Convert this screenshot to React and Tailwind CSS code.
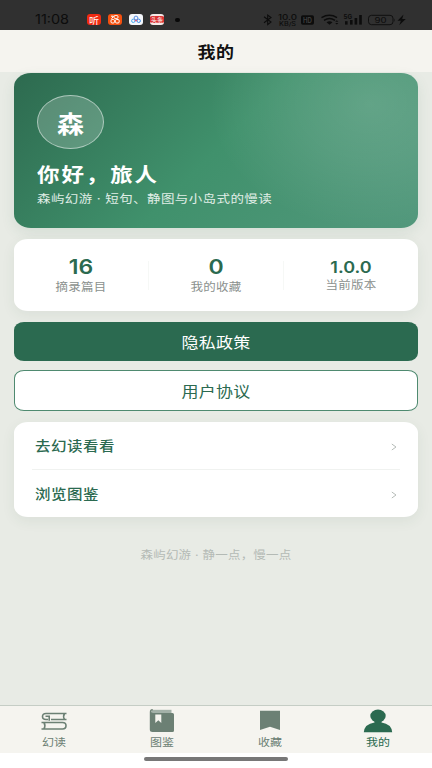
import React from 'react';

const green = '#2b6a50';
const gray = '#6c8074';

// Wide lettering: the font size sets the width, the vertical scale sets the height
function Wide({ className = '', children }) {
    return <span className={`inline-block whitespace-nowrap leading-none scale-y-[0.88] ${className}`}>{children}</span>;
}

function AppBadge({ className, children }) {
    return (
        <span className={`flex h-[11px] w-[14px] items-center justify-center rounded-[3px] ${className}`}>
            {children}
        </span>
    );
}

function StatusBar() {
    return (
        <div className="flex h-[30px] items-center bg-[#303030] pt-[9px] pl-[35px] text-[#0c0c0c]">
            <Wide className="w-[52px] pt-[2px] font-[Inter] text-[14.5px] font-normal">11:08</Wide>
            <div className="flex items-center gap-[7px]">
                <AppBadge className="bg-[#f02a12] text-[10px] text-white">
                    <Wide>听</Wide>
                </AppBadge>
                <AppBadge className="bg-[#f4500f]">
                    <svg width="14" height="11" viewBox="0 0 14 11" fill="none" stroke="#fff" strokeWidth="1">
                        <rect x="6" y="1.500" width="4" height="3" rx="1.200" />
                        <rect x="3" y="5.500" width="3.500" height="3.500" rx="1.200" />
                        <rect x="7.400" y="5.500" width="3.800" height="3.500" rx="1.200" />
                        <path d="M3 2.200h2.500L3.500 4.800" />
                    </svg>
                </AppBadge>
                <AppBadge className="bg-[#f4f6fa]">
                    <svg width="14" height="11" viewBox="0 0 14 11" fill="none" strokeWidth="1">
                        <circle cx="7" cy="4" r="1.900" stroke="#5a8fe0" />
                        <circle cx="4.300" cy="6.800" r="1.700" stroke="#45aaf0" />
                        <circle cx="9.700" cy="6.800" r="1.700" stroke="#3a8fe8" />
                        <path d="M5.500 5.800l1.500 1.400 1.500-1.400" stroke="#e2406a" />
                    </svg>
                </AppBadge>
                <AppBadge className="border-y-2 border-[#f5e9e8] bg-[#dc3333] text-[6px] text-white">
                    <span className="leading-none">头条</span>
                </AppBadge>
            </div>
            <span className="ml-[11px] h-[4px] w-[5px] rounded-full bg-[#080808]" />
            <svg className="ml-[80px]" width="148" height="14" viewBox="260 13 148 14" fill="none" stroke="#0c0c0c">
                <path d="M264 16.800l7 5.200-3.300 2.600V15l3.300 2.500-7 5.200" strokeWidth="1.100" />
                <g fill="#0c0c0c" stroke="none" fontFamily="Inter" fontWeight="500">
                    <text x="278" y="20" fontSize="7.500" textLength="19" lengthAdjust="spacingAndGlyphs">10.0</text>
                    <text x="279" y="25.800" fontSize="5.500" textLength="17" lengthAdjust="spacingAndGlyphs">KB/S</text>
                    <rect x="301" y="15.300" width="13" height="9.400" rx="1.800" />
                    <text x="303" y="22.600" fontSize="7" fontWeight="700" fill="#3c3c3c" textLength="9" lengthAdjust="spacingAndGlyphs">HD</text>
                    <text x="343.500" y="19" fontSize="6" fontWeight="700" textLength="8.500" lengthAdjust="spacingAndGlyphs">5G</text>
                    <text x="374.500" y="22.800" fontSize="7.500" fontWeight="400" textLength="12" lengthAdjust="spacingAndGlyphs">90</text>
                    <rect x="345" y="21.200" width="2.600" height="3.400" />
                    <rect x="350" y="20" width="2.600" height="4.600" />
                    <rect x="354.600" y="18" width="2.600" height="6.600" />
                    <rect x="359.200" y="15" width="2.600" height="9.600" />
                    <path d="M403.500 14.500l-6 6.300h3.400l-1.700 4.500 6.600-6.200h-3.600z" />
                    <path d="M326.500 22.300q3-2 6 0l-3 2.500z" />
                    <path d="M394 18.500q1.300 1.300 0 3.500z" />
                    <path d="M335.200 21.800l1.600-1.600 1.600 1.600zM335.200 23l1.600 1.600 1.600-1.600z" />
                </g>
                <path d="M321.500 17.600q8-4.500 15.500 0M324 20.300q5.500-3.400 11 0" strokeWidth="1.500" />
                <rect x="368.500" y="15.300" width="24.500" height="9.400" rx="3" strokeWidth="0.9" />
            </svg>
        </div>
    );
}

function Hero() {
    return (
        <section className="h-[155px] rounded-[17px/14px] bg-[radial-gradient(ellipse_160px_125px_at_88%_20%,rgba(255,255,255,0.15),rgba(255,255,255,0.09)_45%,transparent),linear-gradient(135deg,#2d6a4f_0%,#40916c_50%,#52987c_100%)] px-[23px] pt-[22px] text-white shadow-[0_5px_14px_rgba(45,106,79,0.1)]">
            <div className="flex h-[54px] w-[67px] items-center justify-center rounded-[50%] border border-white/50 bg-white/20">
                <Wide className="text-[27px] font-bold">森</Wide>
            </div>
            <h2 className="mt-[11px] flex h-[26px] items-center">
                <Wide className="text-[22.5px] font-bold tracking-[1.900px]">你好，旅人</Wide>
            </h2>
            <p className="mt-[4px] flex h-[18px] items-center text-[#e0eee7]">
                <Wide className="text-[13.5px] tracking-[0.400px]">
                    森屿幻游<span className="font-[Inter]"> · </span>短句、静图与小岛式的慢读
                </Wide>
            </p>
        </section>
    );
}

function Stat({ value, label, small }) {
    return (
        <div className="flex flex-1 flex-col items-center justify-center">
            {small ? (
                <Wide className="font-[Inter] text-[18px] font-semibold text-[#2b6a50]">{value}</Wide>
            ) : (
                <Wide className="font-[Inter] text-[23px] font-semibold text-[#2b6a50]">{value}</Wide>
            )}
            <Wide className="mt-[2px] text-[12.5px] tracking-[0.200px] text-[#8b918e]">{label}</Wide>
        </div>
    );
}

function Stats() {
    return (
        <section className="mt-[11px] flex h-[72px] items-center rounded-[14px/11px] bg-white shadow-[0_4px_14px_rgba(45,80,60,0.07)]">
            <Stat value="16" label="摘录篇目" />
            <div className="h-[29px] w-px bg-[#f6f8f6]" />
            <Stat value="0" label="我的收藏" />
            <div className="h-[29px] w-px bg-[#f6f8f6]" />
            <Stat value="1.0.0" label="当前版本" small />
        </section>
    );
}

function LinkRow({ label }) {
    return (
        <div className="flex h-[48px] items-center justify-between px-[3px] text-[#2b6a50]">
            <Wide className="text-[15.5px] font-medium tracking-[0.500px]">{label}</Wide>
            <svg className="mt-[2px]" width="6" height="8" viewBox="0 0 6 8" fill="none" stroke="#b6bcb8" strokeWidth="1">
                <path d="M0.800 1l4.200 3-4.200 3" />
            </svg>
        </div>
    );
}

function Tab({ label, active, children }) {
    return (
        <div className={`flex flex-1 flex-col items-center ${active ? 'text-[#2b6a50]' : 'text-[#6c8074]'}`}>
            <svg width="32" height="26" viewBox="0 0 32 26" className="mt-[2px]">
                {children}
            </svg>
            <Wide className="mt-[2px] text-[12px]">{label}</Wide>
        </div>
    );
}

function TabBar() {
    return (
        <nav className="flex h-[48px] border-t border-[#c5cdc5] bg-[#f5f4ef]">
            <Tab label="幻读">
                <g fill="none" stroke={gray} strokeWidth="1.600">
                    <path d="M28.500 5.500H8Q4.500 5.500 4.500 8.500T8 11.500H10M13 11.500h15.500M26.500 5.500q-1.800 3 0 6M7.500 8.200h3.700v4.500" />
                    <path d="M3.500 14.500H24.500q3.500 0 3.500 3.200T24.500 21H3.500M6 14.500q1.800 3.200 0 6.500" />
                </g>
            </Tab>
            <Tab label="图鉴">
                <path d="M5.500 1.800h20v3.400h-20z" fill="#a3b1a8" />
                <path d="M6.500 1Q3.800 1 3.800 4v17.500q0 2.500 2.700 2.500h20q1.500 0 1.500-1.500V6.500Q28 5 26.500 5H7q-1.700 0-1.700-1.400T7 2.200h0z" fill={gray} />
                <path d="M9.300 6.500h6V15l-3-2.800-3 2.800z" fill="#f5f4ef" />
            </Tab>
            <Tab label="收藏">
                <path d="M6 2.800h20V22l-10-3.300L6 22z" fill={gray} />
            </Tab>
            <Tab label="我的" active>
                <ellipse cx="16" cy="8" rx="7.700" ry="6.400" fill={green} />
                <path d="M12.500 12h7v2.500Q29.500 16 30.200 24.200H1.800Q2.500 16 12.500 14.500z" fill={green} />
            </Tab>
        </nav>
    );
}

export default function App() {
    return (
        <div className="flex h-[768px] w-[432px] flex-col overflow-hidden bg-[#e8ebe5] font-['Noto_Sans_CJK_SC',sans-serif]">
            <StatusBar />
            <header className="flex h-[42px] items-center justify-center bg-[#f5f4ef] text-[#111]">
                <Wide className="text-[18px] font-bold tracking-[0.500px]">我的</Wide>
            </header>
            <main className="flex-1 px-[14px] pt-px">
                <Hero />
                <Stats />
                <button className="mt-[11px] flex h-[39px] w-full items-center justify-center rounded-[10px/8px] bg-[#2b6a50] text-white">
                    <Wide className="text-[17px] tracking-[0.300px]">隐私政策</Wide>
                </button>
                <button className="mt-[9px] flex h-[41px] w-full items-center justify-center rounded-[10px/8px] border border-[#4f8a70] bg-white text-[#2b6a50]">
                    <Wide className="text-[17px] tracking-[0.300px]">用户协议</Wide>
                </button>
                <section className="mt-[11px] h-[95px] divide-y divide-[#f0f2f0] rounded-[14px/11px] bg-white px-[18px] shadow-[0_4px_14px_rgba(45,80,60,0.07)]">
                    <LinkRow label="去幻读看看" />
                    <LinkRow label="浏览图鉴" />
                </section>
                <p className="mt-[30px] flex h-[18px] items-center justify-center text-[#b4bab5]">
                    <Wide className="text-[12.5px] tracking-[0.200px]">
                        森屿幻游<span className="font-[Inter]"> · </span>静一点，慢一点
                    </Wide>
                </p>
            </main>
            <TabBar />
            <div className="flex h-[15px] justify-center bg-white pt-[4px]">
                <span className="h-[4px] w-[144px] rounded-full bg-[#777]" />
            </div>
        </div>
    );
}
